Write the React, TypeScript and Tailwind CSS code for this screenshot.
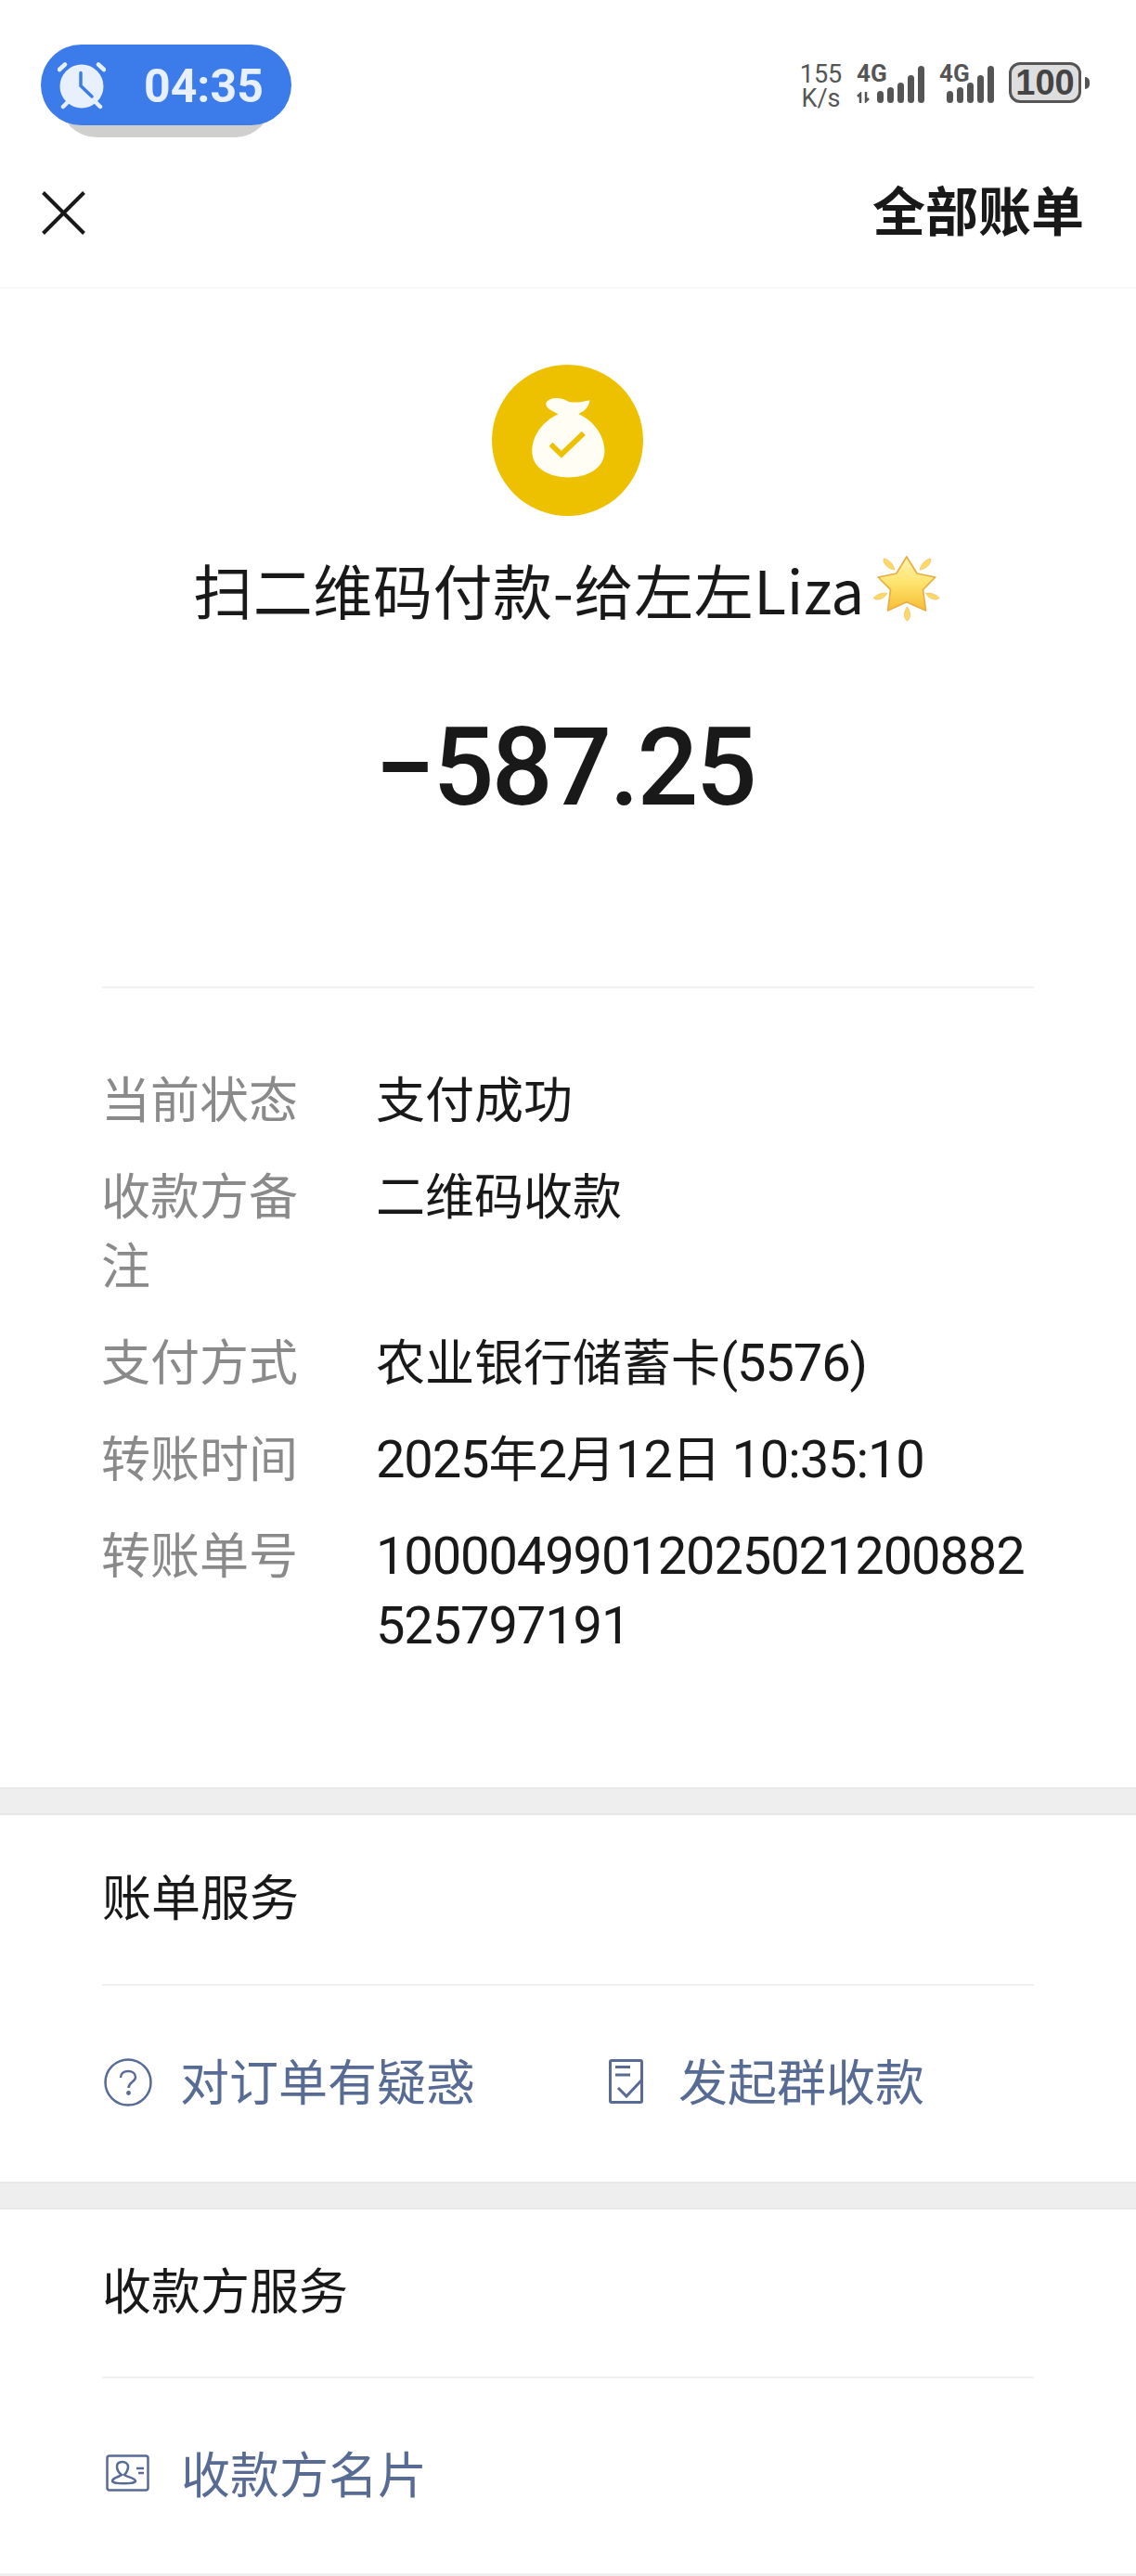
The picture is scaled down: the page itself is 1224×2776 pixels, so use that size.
import React from "react";

const cjk = "font-['Noto_Sans_CJK_SC','Noto_Sans',sans-serif]";
const roboto = "font-['Roboto','Noto_Sans_CJK_SC',sans-serif]";

function Bars() {
  return (
    <div className="flex items-end gap-[4px]">
      {[13, 17, 22, 30, 40].map((h) => (
        <span
          key={h}
          className={`w-[7px] rounded-full bg-[#555555] ${
            h === 13 ? "h-[13px]" : h === 17 ? "h-[17px]" : h === 22 ? "h-[22px]" : h === 30 ? "h-[30px]" : "h-[40px]"
          }`}
        />
      ))}
    </div>
  );
}

function StatusBar() {
  return (
    <div className="flex h-[175px] items-start justify-between pl-[44px] pr-[50px] pt-[48px]">
      <div className="relative h-[100px] w-[270px]">
        <div className="absolute bottom-0 left-[20px] h-[50px] w-[229px] rounded-b-[40px] bg-[#cfd0ce]" />
        <div className="relative flex h-[87px] w-[270px] items-center rounded-full bg-[#3c7bea] pl-[18px]">
          <svg width="52" height="52" viewBox="0 0 52 52" fill="none">
            <circle cx="26" cy="27" r="23.500" fill="#e8f0fd" />
            <path d="M2 9L8 3.500M50 9L44 3.500M6 49L10 45M46 49L42 45" stroke="#e8f0fd" strokeWidth="4.500" strokeLinecap="round" />
            <path d="M25 12.500V26.500L37 38" stroke="#3c7bea" strokeWidth="3.500" strokeLinecap="round" />
          </svg>
          <span className="ml-[41px] mt-[3px] font-['Roboto',sans-serif] text-[50px] font-bold leading-none text-[#e8f0fd]">04:35</span>
        </div>
      </div>
      <div className="flex items-start pt-[19px] text-[#555555]">
        <div className="flex w-[43px] flex-col items-center font-['Roboto',sans-serif] text-[27px] leading-[26px]">
          <span>155</span>
          <span>K/s</span>
        </div>
        <div className="relative ml-[17px] flex h-[44px] w-[73px] items-end justify-end">
          <span className="absolute left-0 top-[-1px] font-['Roboto',sans-serif] text-[26px] font-bold leading-[26px]">4G</span>
          <svg className="absolute bottom-0 left-0" width="14" height="12" viewBox="0 0 14 12" fill="none" stroke="#555555" strokeWidth="2.500">
            <path d="M4 12V2L1 5M10 0V10L13 7" />
          </svg>
          <Bars />
        </div>
        <div className="relative ml-[16px] flex h-[44px] w-[59px] items-end justify-end">
          <span className="absolute left-0 top-[-1px] font-['Roboto',sans-serif] text-[26px] font-bold leading-[26px]">4G</span>
          <Bars />
        </div>
        <div className="ml-[16px] flex items-center gap-[4px]">
          <div className="flex h-[44px] w-[78px] items-center justify-center rounded-[12px] border-[3px] border-[#555555] bg-[#dedede]">
            <span className="font-['Liberation_Sans',sans-serif] text-[38px] font-bold leading-none text-[#444444]">100</span>
          </div>
          <span className="h-[13px] w-[5px] rounded-r-full bg-[#555555]" />
        </div>
      </div>
    </div>
  );
}

function Header() {
  return (
    <div className="flex h-[136px] items-start justify-between border-b-2 border-[#f8f8f8] pl-[45px] pr-[56px]">
      <svg className="mt-[31px]" width="47" height="47" viewBox="0 0 47 47" fill="none">
        <path d="M1.500 1.500L45.500 45.500M45.500 1.500L1.500 45.500" stroke="#191919" strokeWidth="4" />
      </svg>
      <span className="mt-[7px] text-[57px] font-semibold leading-[84px] text-[#191919]">全部账单</span>
    </div>
  );
}

function Star() {
  return (
    <svg className="ml-[7px] shrink-0" width="77" height="75" viewBox="60 45 230 225">
      <defs>
        <linearGradient id="starFill" x1="0" y1="0" x2="0" y2="1">
          <stop offset="0" stopColor="#fff3ae" />
          <stop offset="0.5" stopColor="#fde36c" />
          <stop offset="1" stopColor="#f7bd35" />
        </linearGradient>
      </defs>
      <path d="M173 54L207 108L266 120L226 160L235 228L173 200L112 228L121 160L81 120L140 108Z" fill="url(#starFill)" stroke="#e9ad45" strokeWidth="5" strokeLinejoin="round" />
      <path d="M99 60C112 60 132 78 134 96C116 94 96 78 99 60ZM251 60C238 60 218 78 216 96C234 94 254 78 251 60ZM66 188C74 176 92 170 110 172C102 188 82 198 66 188ZM279 188C271 176 253 170 235 172C243 188 263 198 279 188ZM175 216C185 232 190 248 175 262C160 248 165 232 175 216Z" fill="#fbd968" stroke="#eebd5c" strokeWidth="2" />
    </svg>
  );
}

function Hero() {
  return (
    <div className="flex flex-col items-center pt-[82px]">
      <svg className="mr-[2px]" width="163" height="163" viewBox="30 25 490 490">
        <circle cx="275" cy="270" r="245" fill="#edc100" />
        <path
          d="M205 150C215 130 250 128 280 145C300 150 330 145 347 140C345 165 325 178 310 185C360 205 395 255 395 305C395 360 340 390 278 390C215 390 160 360 160 305C160 255 195 208 245 185C225 175 205 168 205 150Z"
          fill="#fffdf4"
        />
        <path d="M221 283L255 316L327 247" fill="none" stroke="#edc100" strokeWidth="17" />
      </svg>
      <div className="mt-[31px] flex h-[94px] items-center text-[64px] leading-[94px] tracking-[0.6px] text-[#191919]">
        <span>扫二维码付款-给左左Liza</span>
        <Star />
      </div>
      <div className="mr-[7px] mt-[81px] font-['Roboto',sans-serif] text-[116px] font-medium leading-[130px] tracking-[-2.500px] text-[#191919]">−587.25</div>
    </div>
  );
}

function Num({ children }: { children: React.ReactNode }) {
  return <span className={`${roboto} text-[56px] leading-none tracking-[-1.100px]`}>{children}</span>;
}

const rows: [string, React.ReactNode][] = [
  ["当前状态", "支付成功"],
  ["收款方备注", "二维码收款"],
  ["支付方式", <>农业银行储蓄卡<Num>(5576)</Num></>],
  ["转账时间", <><Num>2025</Num>年<Num>2</Num>月<Num>12</Num>日 <Num>10:35:10</Num></>],
  ["转账单号", <Num>10000499012025021200882525797191</Num>],
];

function Details() {
  return (
    <div className="mx-[110px] mt-[171px] flex flex-col gap-[29px] border-t-2 border-[#f0f0f0] pb-[140px] pt-[80px]">
      {rows.map(([k, v]) => (
        <div key={k} className="flex text-[53px] leading-[75px]">
          <span className="-ml-[1px] w-[296px] shrink-0 pr-[36px] text-[#8a8a8a]">{k}</span>
          <span className="min-w-0 flex-1 break-all text-[#191919]">{v}</span>
        </div>
      ))}
    </div>
  );
}

function Band() {
  return <div className="h-[30px] border-y-2 border-[#e8e8e8] bg-[#eeeeee]" />;
}

function Link({ icon, text, className = "" }: { icon: React.ReactNode; text: string; className?: string }) {
  return (
    <div className={`flex items-center ${className}`}>
      {icon}
      <span className="text-[53px] leading-[75px] text-[#576b95]">{text}</span>
    </div>
  );
}

const QIcon = (
  <svg className="ml-[2px] mr-[30px] mt-[5px]" width="52" height="52" viewBox="0 0 52 52" fill="none" stroke="#576b95" strokeWidth="2.500">
    <circle cx="26" cy="26" r="24.500" />
    <path d="M18 21C18 16.500 21.500 14 26 14C30.500 14 34 16.500 34 20.500C34 25.500 26.500 25.500 26.500 32" />
    <circle cx="26.500" cy="37.500" r="1.200" fill="#576b95" />
  </svg>
);

const BillIcon = (
  <svg className="ml-[8px] mr-[38px] mt-[2px]" width="37" height="48" viewBox="0 0 37 48" fill="none" stroke="#576b95" strokeWidth="3">
    <rect x="1.500" y="1.500" width="34" height="45" rx="1.500" />
    <path d="M7 8.500H23M7 17H23" />
    <path d="M10 31L19 40L35 23" />
  </svg>
);

const CardIcon = (
  <svg className="ml-[4px] mr-[34px] mt-[2px]" width="47" height="40" viewBox="0 0 47 40" fill="none" stroke="#576b95" strokeWidth="2.500">
    <rect x="1.500" y="1.500" width="44" height="37" rx="2.500" />
    <path d="M7 29C7 25 13 25 17 22C13 19 12 15 12 13C12 9 15 8 18 8C21 8 24 10 24 13C24 16 22 20 20 22C24 25 32 25 32 29C32 32 7 32 7 29Z" />
    <path d="M33 15H41M35 20H41" />
  </svg>
);

export default function App() {
  return (
    <div className={`h-[2776px] w-[1224px] overflow-hidden bg-white ${cjk}`}>
      <StatusBar />
      <Header />
      <Hero />
      <Details />
      <Band />
      <div className="px-[110px]">
        <div className="flex h-[184px] items-center border-b-2 border-[#f0f0f0] pb-[10px] text-[53px] leading-[75px] text-[#191919]">账单服务</div>
        <div className="flex h-[211px] items-center pb-[8px]">
          <Link icon={QIcon} text="对订单有疑惑" className="w-[538px]" />
          <Link icon={BillIcon} text="发起群收款" />
        </div>
      </div>
      <Band />
      <div className="px-[110px]">
        <div className="flex h-[182px] items-center border-b-2 border-[#f0f0f0] pb-[10px] text-[53px] leading-[75px] text-[#191919]">收款方服务</div>
        <div className="flex h-[210px] items-center pb-[8px]">
          <Link icon={CardIcon} text="收款方名片" />
        </div>
      </div>
      <div className="h-[4px] bg-[#eeeeee]" />
    </div>
  );
}
